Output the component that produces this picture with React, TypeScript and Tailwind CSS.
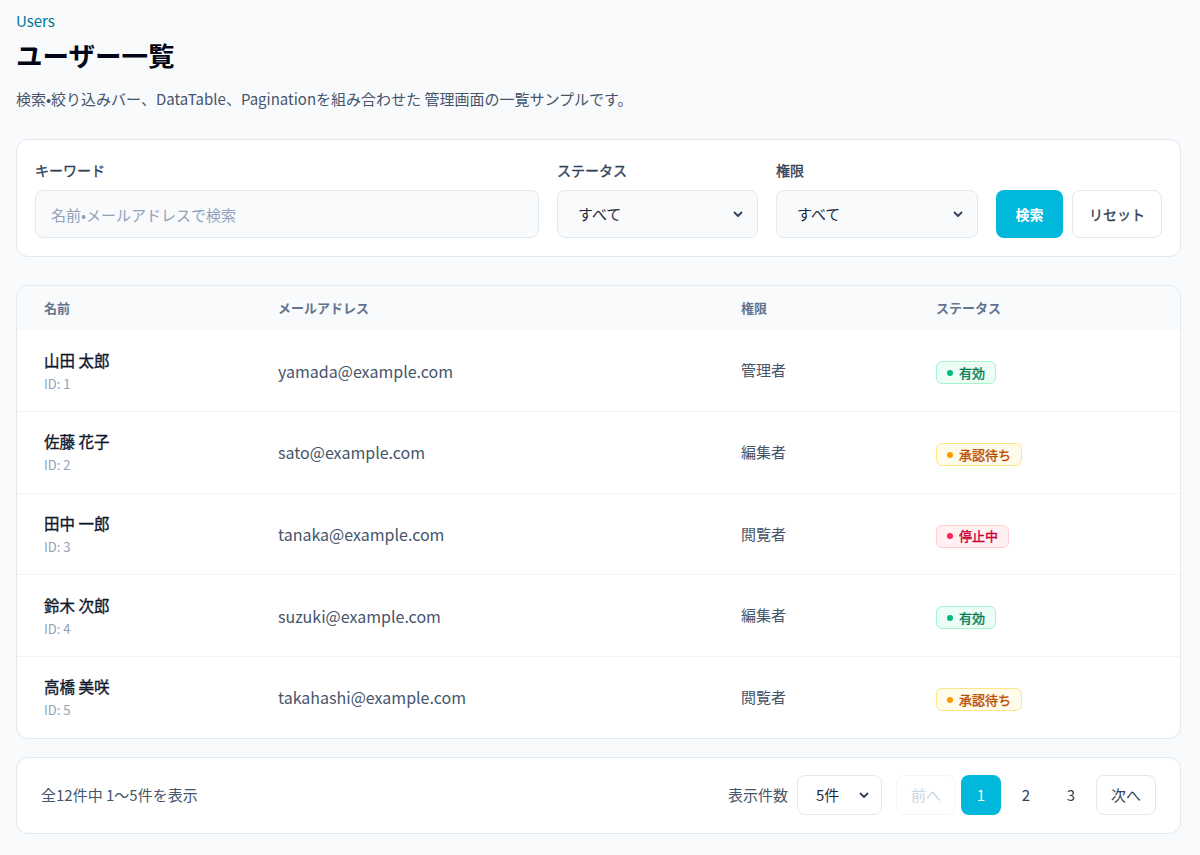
import React from 'react';

type Status = 'active' | 'pending' | 'suspended';

type User = {
    id: number;
    name: string;
    email: string;
    role: string;
    status: Status;
};

const users: User[] = [
    { id: 1, name: '山田 太郎', email: 'yamada@example.com', role: '管理者', status: 'active' },
    { id: 2, name: '佐藤 花子', email: 'sato@example.com', role: '編集者', status: 'pending' },
    { id: 3, name: '田中 一郎', email: 'tanaka@example.com', role: '閲覧者', status: 'suspended' },
    { id: 4, name: '鈴木 次郎', email: 'suzuki@example.com', role: '編集者', status: 'active' },
    { id: 5, name: '高橋 美咲', email: 'takahashi@example.com', role: '閲覧者', status: 'pending' },
];

const font = { fontFamily: '"Noto Sans CJK JP", "Noto Sans", sans-serif' };

// the CJK font has no medium weight, so thicken regular a little
const medium = '[-webkit-text-stroke:0.35px]';

const Chevron = () => (
    <svg width="10" height="7" viewBox="0 0 10 7" fill="none" className="text-slate-700">
        <path d="M1.5 1.5L5 5l3.5-3.5" stroke="currentColor" strokeWidth="1.8" strokeLinecap="round" strokeLinejoin="round" />
    </svg>
);

const SelectBox = ({ value, className }: { value: string, className: string }) => (
    <div className={`flex items-center justify-between rounded-lg border border-slate-200 text-[15px] text-slate-800 ${className}`}>
        <span>{value}</span>
        <Chevron />
    </div>
);

const StatusBadge = ({ status }: { status: Status }) => {
    const styles = {
        active: { box: 'bg-emerald-50 border-emerald-200 text-emerald-700', dot: 'bg-emerald-500', label: '有効' },
        pending: { box: 'bg-amber-50 border-amber-200 text-amber-700', dot: 'bg-amber-500', label: '承認待ち' },
        suspended: { box: 'bg-rose-50 border-rose-200 text-rose-700', dot: 'bg-rose-500', label: '停止中' },
    }[status];
    return (
        <span className={`inline-flex items-center gap-1.5 h-[23px] px-2.5 rounded-md border text-[13px] ${medium} ${styles.box}`}>
            <span className={`w-1.5 h-1.5 rounded-full ${styles.dot}`} />
            {styles.label}
        </span>
    );
};

export default function App() {
    return (
        <div style={font} className="min-h-[855px] bg-slate-50 pl-4 pr-[19px] pt-[9px] pb-6">
            <p className="text-[15px] leading-6 text-cyan-700">Users</p>
            <h1 className="mt-1 text-[26.5px] leading-9 font-bold text-slate-950">ユーザー一覧</h1>
            <p className="mt-[15px] text-[15px] leading-[22px] text-slate-600">
                検索•絞り込みバー、DataTable、Paginationを組み合わせた 管理画面の一覧サンプルです。
            </p>

            {/* filters */}
            <div className="mt-[29px] bg-white border border-slate-200 rounded-xl px-[18px] pt-5 pb-[18px]">
                <div className="grid grid-cols-[1fr_201px_202px_auto] gap-x-[18px]">
                    <div>
                        <label className={`block text-[14px] leading-5 text-slate-700 ${medium}`}>キーワード</label>
                        <input
                            type="text"
                            placeholder="名前•メールアドレスで検索"
                            className="mt-[10px] w-full h-12 px-[15px] rounded-lg border border-slate-200 bg-slate-50 text-[15px] placeholder:text-slate-400 outline-none"
                        />
                    </div>
                    <div>
                        <label className={`block text-[14px] leading-5 text-slate-700 ${medium}`}>ステータス</label>
                        <SelectBox value="すべて" className="mt-[10px] h-12 pl-5 pr-[14px] bg-slate-50" />
                    </div>
                    <div>
                        <label className={`block text-[14px] leading-5 text-slate-700 ${medium}`}>権限</label>
                        <SelectBox value="すべて" className="mt-[10px] h-12 pl-5 pr-[14px] bg-slate-50" />
                    </div>
                    <div className="flex items-end gap-[9px]">
                        <button className="h-12 w-[67px] rounded-lg bg-cyan-500 text-white text-[14px] font-semibold">検索</button>
                        <button className={`h-12 w-[90px] rounded-lg border border-slate-200 bg-white text-slate-700 text-[14px] ${medium}`}>リセット</button>
                    </div>
                </div>
            </div>

            {/* table */}
            <div className="mt-[28px] bg-white border border-slate-200 rounded-xl overflow-hidden">
                <table className="w-full table-fixed border-collapse">
                    <colgroup>
                        <col className="w-[234px]" />
                        <col className="w-[463px]" />
                        <col className="w-[195px]" />
                        <col />
                    </colgroup>
                    <thead>
                        <tr className="bg-slate-50 h-[44px]">
                            {['名前', 'メールアドレス', '権限', 'ステータス'].map(h => (
                                <th key={h} className="pl-[27px] text-left text-[13px] font-semibold text-slate-500">{h}</th>
                            ))}
                        </tr>
                    </thead>
                    <tbody>
                        {users.map((u, i) => (
                            <tr key={u.id} className={`h-[81.6px] ${i > 0 ? 'border-t border-slate-100' : ''}`}>
                                <td className="pl-[27px]">
                                    <div className={`text-[15.5px] leading-[22px] text-slate-900 ${medium}`}>{u.name}</div>
                                    <div className="mt-1 text-[13px] leading-[18px] text-slate-400">ID: {u.id}</div>
                                </td>
                                <td className="pl-[27px] text-[16px] text-slate-600">{u.email}</td>
                                <td className="pl-[27px] text-[15px] text-slate-600">{u.role}</td>
                                <td className="pl-[27px]"><StatusBadge status={u.status} /></td>
                            </tr>
                        ))}
                    </tbody>
                </table>
            </div>

            {/* pagination */}
            <div className="mt-[18px] h-[77px] bg-white border border-slate-200 rounded-xl px-6 flex items-center justify-between">
                <p className="text-[15px] text-slate-600">全12件中 1〜5件を表示</p>
                <div className="flex items-center gap-[14px]">
                    <div className="flex items-center gap-[9px]">
                        <span className="text-[15px] text-slate-600">表示件数</span>
                        <SelectBox value="5件" className="w-[85px] h-10 pl-[18px] pr-3 bg-white" />
                    </div>
                    <div className="flex items-center gap-[5px]">
                        <button disabled className="h-10 w-[60px] rounded-lg border border-slate-100 text-[15px] text-slate-300">前へ</button>
                        <button className="h-10 w-10 rounded-lg bg-cyan-500 text-white text-[15px]">1</button>
                        <button className="h-10 w-10 rounded-lg text-slate-700 text-[15px]">2</button>
                        <button className="h-10 w-10 rounded-lg text-slate-700 text-[15px]">3</button>
                        <button className="h-10 w-[60px] rounded-lg border border-slate-200 text-[15px] text-slate-700">次へ</button>
                    </div>
                </div>
            </div>
        </div>
    );
}
